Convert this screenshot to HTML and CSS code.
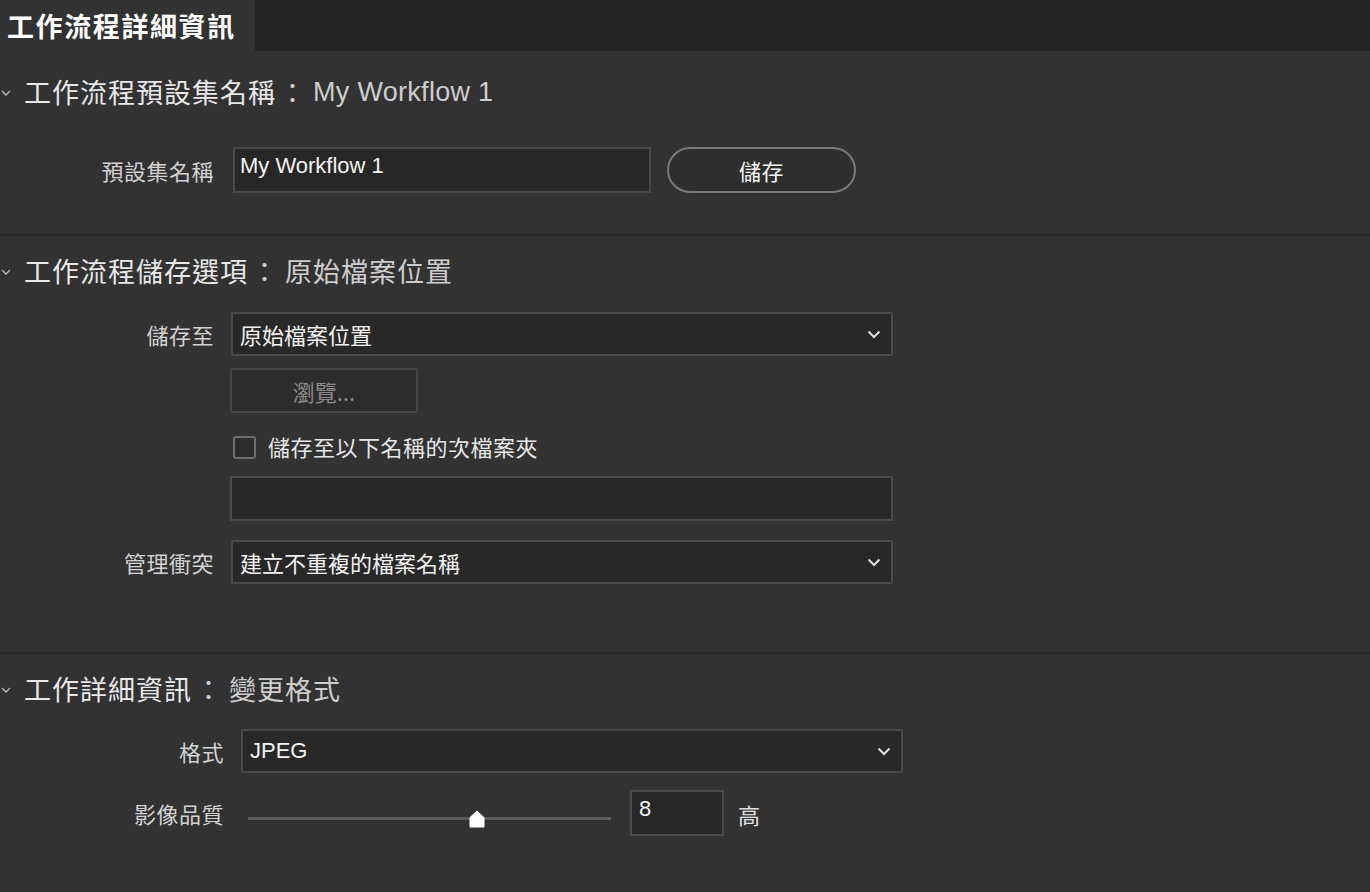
FILE: index.html
```html
<!DOCTYPE html>
<html lang="zh-Hant">
<head>
<meta charset="utf-8">
<title>工作流程詳細資訊</title>
<link rel="stylesheet" href="styles.css">
</head>
<body>
<div class="tabbar"><div class="tab">工作流程詳細資訊</div></div>

<section class="sec sec1">
  <div class="sec-head">
    <svg class="caret" viewBox="0 0 10 6" width="10" height="6"><path d="M1 1 L5 5 L9 1" fill="none" stroke="#bdbdbd" stroke-width="1.3"/></svg>
    <span class="h-key">工作流程預設集名稱</span><span class="h-colon">：</span><span class="h-val latin">My Workflow 1</span>
  </div>
  <div class="row row-name">
    <div class="lbl">預設集名稱</div>
    <div class="field name-field latin">My Workflow 1</div>
    <button class="pill">儲存</button>
  </div>
</section>
<div class="divider"></div>

<section class="sec sec2">
  <div class="sec-head">
    <svg class="caret" viewBox="0 0 10 6" width="10" height="6"><path d="M1 1 L5 5 L9 1" fill="none" stroke="#bdbdbd" stroke-width="1.3"/></svg>
    <span class="h-key">工作流程儲存選項</span><span class="h-colon">：</span><span class="h-val">原始檔案位置</span>
  </div>
  <div class="row row-saveto">
    <div class="lbl">儲存至</div>
    <div class="select">
      <span>原始檔案位置</span>
      <svg class="chev" viewBox="0 0 14 9" width="14" height="9"><path d="M1.5 1.5 L7 7 L12.5 1.5" fill="none" stroke="#e0e0e0" stroke-width="2"/></svg>
    </div>
  </div>
  <div class="row row-browse">
    <div class="lbl"></div>
    <button class="browse">瀏覽...</button>
  </div>
  <div class="row row-check">
    <div class="lbl"></div>
    <span class="checkbox"></span>
    <span class="check-text">儲存至以下名稱的次檔案夾</span>
  </div>
  <div class="row row-sub">
    <div class="lbl"></div>
    <div class="field sub-field"></div>
  </div>
  <div class="row row-conflict">
    <div class="lbl">管理衝突</div>
    <div class="select">
      <span>建立不重複的檔案名稱</span>
      <svg class="chev" viewBox="0 0 14 9" width="14" height="9"><path d="M1.5 1.5 L7 7 L12.5 1.5" fill="none" stroke="#e0e0e0" stroke-width="2"/></svg>
    </div>
  </div>
</section>
<div class="divider"></div>

<section class="sec sec3">
  <div class="sec-head">
    <svg class="caret" viewBox="0 0 10 6" width="10" height="6"><path d="M1 1 L5 5 L9 1" fill="none" stroke="#bdbdbd" stroke-width="1.3"/></svg>
    <span class="h-key">工作詳細資訊</span><span class="h-colon">：</span><span class="h-val">變更格式</span>
  </div>
  <div class="row row-format">
    <div class="lbl lbl-wide">格式</div>
    <div class="select">
      <span class="latin">JPEG</span>
      <svg class="chev" viewBox="0 0 14 9" width="14" height="9"><path d="M1.5 1.5 L7 7 L12.5 1.5" fill="none" stroke="#e0e0e0" stroke-width="2"/></svg>
    </div>
  </div>
  <div class="row row-quality">
    <div class="lbl lbl-wide">影像品質</div>
    <div class="slider">
      <div class="track"></div>
      <svg class="thumb" style="left: 63%" viewBox="0 0 16 18" width="16" height="18"><path d="M8 1 L15 7.5 L15 17 L1 17 L1 7.5 Z" fill="#ffffff" stroke="#ffffff" stroke-width="1" stroke-linejoin="round"/></svg>
    </div>
    <div class="field num-field latin">8</div>
    <span class="unit">高</span>
  </div>
</section>
</body>
</html>
```

FILE: styles.css
```css
* { box-sizing: border-box; }

html, body {
  margin: 0;
  padding: 0;
  background: #323232;
  height: 100%;
}

body {
  font-family: "Noto Sans CJK TC", "Liberation Sans", sans-serif;
  color: #e6e6e6;
  overflow: hidden;
}

.latin {
  font-family: "Liberation Sans", "Noto Sans CJK TC", sans-serif;
}

.tabbar {
  height: 51px;
  background: #252525;
  display: flex;
}

.tab {
  width: 255px;
  background: #323232;
  color: #ffffff;
  font-weight: 700;
  font-size: 27px;
  letter-spacing: 1.6px;
  line-height: 51px;
  padding-left: 7px;
}

.sec {
  display: flex;
  flex-direction: column;
}

.sec1 { padding-top: 21px; padding-bottom: 40px; }
.sec2 { padding-top: 15px; padding-bottom: 68px; }
.sec3 { padding-top: 14px; }

.divider {
  height: 3px;
  background: #2a2a2a;
}

.sec-head {
  display: flex;
  align-items: center;
  height: 40px;
  padding-left: 1px;
  font-size: 27px;
  letter-spacing: 1px;
  line-height: 40px;
  white-space: nowrap;
}

.caret {
  margin-right: 13px;
  margin-top: 2px;
  flex: none;
}

.h-key { color: #e8e8e8; }
.h-colon { color: #d0d0d0; margin-left: 3px; margin-right: 6px; }
.h-val { color: #cdcdcd; }
.h-val.latin { font-size: 27px; letter-spacing: 0.3px; margin-left: 0; }

.row {
  display: flex;
  align-items: center;
}

.lbl {
  width: 214px;
  flex: none;
  text-align: right;
  font-size: 22px;
  letter-spacing: 0.5px;
  color: #d2d2d2;
  line-height: 30px;
}

.lbl-wide { width: 224px; }

.row-name { margin-top: 35px; }
.row-name .lbl { margin-right: 19px; }

.field {
  background: #272727;
  border: 2px solid #4a4a4a;
  color: #f2f2f2;
}

.name-field {
  width: 418px;
  height: 46px;
  font-size: 22px;
  line-height: 30px;
  padding: 2px 5px;
}

.pill {
  margin-left: 16px;
  width: 189px;
  height: 46px;
  border-radius: 23px;
  border: 2px solid #7a7a7a;
  background: #2e2e2e;
  color: #f4f4f4;
  font-family: "Noto Sans CJK TC", sans-serif;
  font-size: 22px;
  letter-spacing: 0.5px;
  padding: 0;
}

.sec2 .lbl { margin-right: 17px; }
.sec2 .row-browse .lbl,
.sec2 .row-sub .lbl { margin-right: 16px; }

.select {
  width: 662px;
  height: 44px;
  background: #282828;
  border: 2px solid #4a4a4a;
  border-radius: 2px;
  display: flex;
  align-items: center;
  justify-content: space-between;
  padding: 0 10px 0 7px;
  font-size: 22px;
  color: #f2f2f2;
  line-height: 30px;
}

.select .latin { font-size: 22px; }

.chev { flex: none; margin-top: 1px; }

.row-saveto { margin-top: 21px; }

.row-browse { margin-top: 12px; }

.browse {
  width: 188px;
  height: 45px;
  background: #2c2c2c;
  border: 2px solid #464646;
  border-radius: 3px;
  color: #8a8a8a;
  font-family: "Noto Sans CJK TC", sans-serif;
  font-size: 22px;
  padding: 0;
}

.row-check { margin-top: 22px; height: 24px; }
.row-check .lbl { margin-right: 19px; }

.checkbox {
  width: 23px;
  height: 23px;
  border: 2px solid #6e6e6e;
  border-radius: 3px;
  background: #2c2c2c;
  flex: none;
}

.check-text {
  margin-left: 12px;
  font-size: 22px;
  letter-spacing: 0.5px;
  color: #e6e6e6;
  line-height: 30px;
  margin-top: -3px;
}

.row-sub { margin-top: 17px; }

.sub-field {
  width: 663px;
  height: 45px;
}

.row-conflict { margin-top: 19px; }

.row-format { margin-top: 20px; }
.sec3 .lbl { margin-right: 17px; }

.row-quality { margin-top: 17px; }
.row-quality .lbl { margin-right: 24px; }

.slider {
  position: relative;
  width: 363px;
  height: 46px;
  flex: none;
}

.track {
  position: absolute;
  left: 0;
  right: 0;
  top: 27px;
  height: 3px;
  background: #5a5a5a;
}

.thumb {
  position: absolute;
  top: 20px;
  margin-left: -8px;
}

.num-field {
  margin-left: 19px;
  width: 94px;
  height: 46px;
  font-size: 22px;
  line-height: 30px;
  padding: 2px 7px;
}

.unit {
  margin-left: 14px;
  font-size: 22px;
  color: #e0e0e0;
  margin-top: 2px;
}
```
